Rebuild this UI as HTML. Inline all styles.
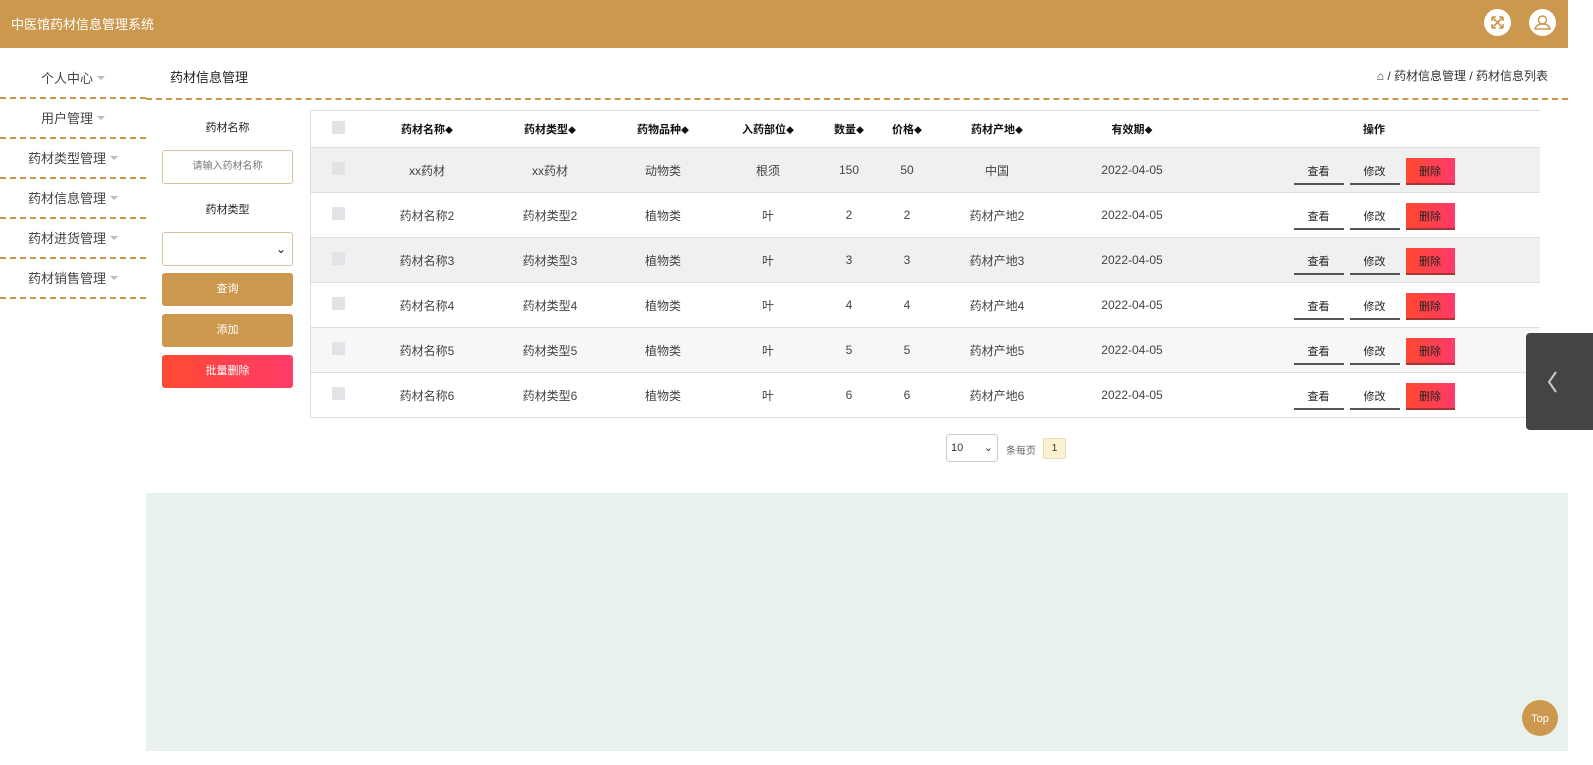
<!DOCTYPE html>
<html><head><meta charset="utf-8"><style>
*{box-sizing:border-box;margin:0;padding:0}
body{width:1593px;height:765px;overflow:hidden;background:#fff;font-family:"Liberation Sans","Noto Sans CJK SC",sans-serif;position:relative;color:#333}
.top{position:absolute;left:0;top:0;width:1568px;height:48px;background:#cc984e}
.top .t{position:absolute;left:11px;top:14px;color:#fff;font-size:13px}
.ic{position:absolute;top:9px;width:27px;height:27px;border-radius:50%;background:#fff}
.side{position:absolute;left:0;top:48px;width:146px}
.si{height:40px;border-bottom:2px dashed #c8964c;font-size:13px;color:#444;text-align:center;line-height:40px;position:relative}
.si:after{content:"";display:inline-block;border:4px solid transparent;border-top:4px solid #bbb;margin-left:4px;vertical-align:-1px}
.hdl{position:absolute;left:146px;top:98px;width:1422px;border-top:2px dashed #c8964c}
.ttl{position:absolute;left:170px;top:67px;font-size:13px;color:#222}
.bc{position:absolute;right:45px;top:67px;font-size:12px;color:#333}
.lbl{position:absolute;left:162px;width:131px;text-align:center;font-size:11px;color:#222}
.inp{position:absolute;left:162px;width:131px;height:34px;border:1px solid #d8c39e;border-radius:3px;background:#fff;font-size:10px;color:#777;text-align:center;line-height:32px}
.btn{position:absolute;left:162px;width:131px;height:33px;border-radius:3px;color:#fff;font-size:11px;text-align:center;line-height:33px;background:#cc984e}
table{position:absolute;left:310px;top:110px;width:1230px;border-collapse:collapse;font-size:12px;color:#444}
td,th{text-align:center;border-top:1px solid #ddd}
th{height:37px;color:#111;font-weight:bold;font-size:11px}
td{height:45px}
.cb{display:inline-block;width:13px;height:13px;background:#e2e3e6}
.s{font-size:8px}
.b{display:inline-block;width:50px;height:27px;line-height:28px;border-bottom:2px solid #555;margin:3px 3px 0;vertical-align:middle;color:#222;font-size:11px}
.d{background:linear-gradient(90deg,#ff4830,#ff3a6a);border-bottom-color:#a33;width:49px}
.pan{position:absolute;left:1526px;top:333px;width:67px;height:97px;background:#444;border-radius:4px 0 0 4px}
.green{position:absolute;left:146px;top:493px;width:1422px;height:258px;background:#e8f1ec}
</style></head><body>
<div class="top"><div class="t">中医馆药材信息管理系统</div>
<div class="ic" style="left:1484px"><svg width="27" height="27" viewBox="0 0 27 27" fill="none" stroke="#cc984e" stroke-width="1.6"><path d="M8 8l11 11M19 8L8 19M8 8h4M8 8v4M19 8h-4M19 8v4M8 19h4M8 19v-4M19 19h-4M19 19v-4"/></svg></div>
<div class="ic" style="left:1529px"><svg width="27" height="27" viewBox="0 0 27 27" fill="none" stroke="#cc984e" stroke-width="1.5"><circle cx="13.5" cy="11" r="4"/><path d="M6 20c1-4 4-5 7.5-5s6.5 1 7.5 5z"/></svg></div>
</div>
<div class="side">
<div class="si" style="height:51px;line-height:62px">个人中心</div><div class="si">用户管理</div><div class="si">药材类型管理</div><div class="si">药材信息管理</div><div class="si">药材进货管理</div><div class="si">药材销售管理</div>
</div>
<div class="hdl"></div>
<div class="ttl">药材信息管理</div>
<div class="bc">⌂ / 药材信息管理 / 药材信息列表</div>
<div class="lbl" style="top:119px">药材名称</div>
<div class="inp" style="top:150px">请输入药材名称</div>
<div class="lbl" style="top:201px">药材类型</div>
<div class="inp" style="top:232px;text-align:right;padding-right:6px;color:#222;font-size:12px">⌄</div>
<div class="btn" style="top:273px">查询</div>
<div class="btn" style="top:314px">添加</div>
<div class="btn" style="top:355px;background:linear-gradient(90deg,#ff4a30,#ff3b6a)">批量删除</div>
<table>
<tr><th style="width:56px"><span class="cb"></span></th><th style="width:122px">药材名称<span class="s">◆</span></th><th style="width:124px">药材类型<span class="s">◆</span></th><th style="width:102px">药物品种<span class="s">◆</span></th><th style="width:108px">入药部位<span class="s">◆</span></th><th style="width:54px">数量<span class="s">◆</span></th><th style="width:62px">价格<span class="s">◆</span></th><th style="width:118px">药材产地<span class="s">◆</span></th><th style="width:152px">有效期<span class="s">◆</span></th><th>操作</th></tr>
<tr style="background:#f0f0f0"><td><span class="cb"></span></td><td>xx药材</td><td>xx药材</td><td>动物类</td><td>根须</td><td>150</td><td>50</td><td>中国</td><td>2022-04-05</td><td><span class="b">查看</span><span class="b">修改</span><span class="b d">删除</span></td></tr>
<tr><td><span class="cb"></span></td><td>药材名称2</td><td>药材类型2</td><td>植物类</td><td>叶</td><td>2</td><td>2</td><td>药材产地2</td><td>2022-04-05</td><td><span class="b">查看</span><span class="b">修改</span><span class="b d">删除</span></td></tr>
<tr style="background:#f0f0f0"><td><span class="cb"></span></td><td>药材名称3</td><td>药材类型3</td><td>植物类</td><td>叶</td><td>3</td><td>3</td><td>药材产地3</td><td>2022-04-05</td><td><span class="b">查看</span><span class="b">修改</span><span class="b d">删除</span></td></tr>
<tr><td><span class="cb"></span></td><td>药材名称4</td><td>药材类型4</td><td>植物类</td><td>叶</td><td>4</td><td>4</td><td>药材产地4</td><td>2022-04-05</td><td><span class="b">查看</span><span class="b">修改</span><span class="b d">删除</span></td></tr>
<tr style="background:#f7f7f7"><td><span class="cb"></span></td><td>药材名称5</td><td>药材类型5</td><td>植物类</td><td>叶</td><td>5</td><td>5</td><td>药材产地5</td><td>2022-04-05</td><td><span class="b">查看</span><span class="b">修改</span><span class="b d">删除</span></td></tr>
<tr style="border-bottom:1px solid #ddd"><td><span class="cb"></span></td><td>药材名称6</td><td>药材类型6</td><td>植物类</td><td>叶</td><td>6</td><td>6</td><td>药材产地6</td><td>2022-04-05</td><td><span class="b">查看</span><span class="b">修改</span><span class="b d">删除</span></td></tr>
</table>
<div style="position:absolute;left:310px;top:110px;width:1px;height:308px;background:#ddd"></div>
<div style="position:absolute;left:946px;top:434px;width:52px;height:28px;border:1px solid #ccc;border-radius:3px;font-size:11px;line-height:26px;padding-left:4px">10<span style="position:absolute;right:4px;font-size:11px">⌄</span></div>
<div style="position:absolute;left:1006px;top:442px;font-size:10px;color:#666">条每页</div>
<div style="position:absolute;left:1043px;top:438px;width:23px;height:21px;background:#fdf2d0;border:1px solid #e8dcb5;border-radius:2px;font-size:10px;text-align:center;line-height:19px">1</div>
<div class="pan"><svg width="67" height="97"><path d="M30 39l-7 10 7 10" fill="none" stroke="#ccc" stroke-width="2"/></svg></div>
<div class="green"></div>
<div style="position:absolute;left:1522px;top:700px;width:36px;height:36px;border-radius:50%;background:#cc984e;color:#fff;font-size:11px;text-align:center;line-height:38px">Top</div>
</body></html>
